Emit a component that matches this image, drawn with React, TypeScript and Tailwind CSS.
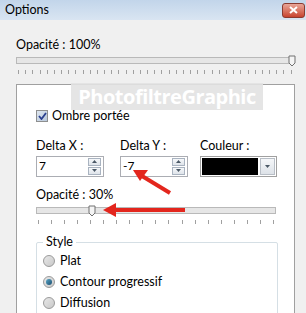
import React from "react";

const font = { fontFamily: 'Lato, "Noto Sans", sans-serif' };

function SliderThumb() {
  return (
    <svg width="8" height="12" viewBox="0 0 8 12" className="block">
      <path d="M1 1 H7 V8 L4 11 L1 8 Z" fill="#f4f4f4" stroke="#707070" strokeWidth="1" />
    </svg>
  );
}

function Slider({ ticks, thumbLeft }: { ticks: number; thumbLeft: string }) {
  return (
    <div>
      <div className="relative h-[12px]">
        <div className="absolute left-0 right-0 top-[2px] h-[7px] border border-[#b9b9b9] bg-[#e6e6e6]" />
        <div className="absolute top-0" style={{ left: thumbLeft }}>
          <SliderThumb />
        </div>
      </div>
      <div className="mt-[3px] flex justify-between px-[2px]">
        {Array.from({ length: ticks }).map((_, i) => (
          <div key={i} className="h-[4px] w-px bg-[#a0a0a0]" />
        ))}
      </div>
    </div>
  );
}

function Spin({ value }: { value: string }) {
  return (
    <div className="flex h-[21px] w-[68px] items-center border border-[#abadb3] bg-white pl-[2px] pr-[2px]">
      <span className="flex-1 text-[12px] leading-none text-black">{value}</span>
      <div className="flex flex-col gap-[1px]">
        {["up", "down"].map((d) => (
          <div
            key={d}
            className="flex h-[8px] w-[13px] items-center justify-center border border-[#a9b3c0] bg-gradient-to-b from-[#f6f8fa] to-[#dfe4ea]"
          >
            <svg width="5" height="3" viewBox="0 0 5 3">
              <path d={d === "up" ? "M0 3 L2.5 0 L5 3 Z" : "M0 0 L2.5 3 L5 0 Z"} fill="#4a5866" />
            </svg>
          </div>
        ))}
      </div>
    </div>
  );
}

function Radio({ checked, label }: { checked?: boolean; label: string }) {
  return (
    <div className="flex h-[21px] items-center gap-[5px]">
      <div className="flex h-[12px] w-[12px] items-center justify-center rounded-full border border-[#9a9a9a] bg-gradient-to-br from-[#e8e8e8] to-[#c9c9c9]">
        {checked && <div className="h-[6px] w-[6px] rounded-full bg-gradient-to-br from-[#5aa7c7] to-[#1b4e70]" />}
      </div>
      <span className="text-[12.5px] text-black">{label}</span>
    </div>
  );
}

export default function App() {
  return (
    <div className="relative h-[313px] w-[306px] overflow-hidden bg-[#f0f0f0] select-none" style={font}>
      {/* Title bar */}
      <div className="flex h-[20px] items-center justify-between bg-gradient-to-b from-[#c2d5ea] to-[#d9e5f2] pl-[5px] pr-[1px]">
        <span className="text-[12.5px] text-black">Options</span>
        <div className="flex h-[15px] w-[23px] items-center justify-center rounded-[3px] border border-[#8a3a30] bg-gradient-to-b from-[#e8a598] to-[#c7422e]">
          <svg width="9" height="8" viewBox="0 0 9 8">
            <path d="M1 1 L8 7 M8 1 L1 7" stroke="white" strokeWidth="2" />
          </svg>
        </div>
      </div>

      {/* Body */}
      <div className="px-[16px] pt-[17px]">
        <div className="text-[12.5px] leading-[16px] text-black">Opacité : 100%</div>
        <div className="mt-[2px] w-[278px]">
          <Slider ticks={39} thumbLeft="272px" />
        </div>

        {/* Panel */}
        <div className="mt-[10px] h-[260px] w-[279px] border border-[#a0a0a0] bg-white px-[19px] pt-[22px]">
          <div className="flex items-center gap-[4px]">
            <div className="flex h-[12px] w-[12px] items-center justify-center border border-[#8e8f8f] bg-gradient-to-br from-[#dfe7f0] to-[#b8c8dc]">
              <svg width="9" height="8" viewBox="0 0 9 8">
                <path d="M1 4 L3.5 7 L8 1" stroke="#2a3f8e" strokeWidth="1.8" fill="none" />
              </svg>
            </div>
            <span className="text-[12.5px] text-black">Ombre portée</span>
          </div>

          <div className="mt-[12px] flex">
            <div className="flex flex-col gap-[2px]">
              <span className="text-[12.5px] leading-[16px] text-black">Delta X :</span>
              <Spin value="7" />
            </div>
            <div className="ml-[16px] flex flex-col gap-[2px]">
              <span className="text-[12.5px] leading-[16px] text-black">Delta Y :</span>
              <Spin value="-7" />
            </div>
            <div className="ml-[12px] flex flex-col gap-[2px]">
              <span className="text-[12.5px] leading-[16px] text-black">Couleur :</span>
              <div className="flex h-[21px] w-[77px] items-center gap-[2px] border border-[#a0a0a0] bg-white p-[1px]">
                <div className="h-full flex-1 bg-black" />
                <div className="flex h-full w-[15px] items-center justify-center border border-[#b8bec6] bg-gradient-to-b from-[#f5f7f9] to-[#dde2e8]">
                  <svg width="5" height="3" viewBox="0 0 5 3">
                    <path d="M0 0 L2.5 3 L5 0 Z" fill="#4a5866" />
                  </svg>
                </div>
              </div>
            </div>
          </div>

          <div className="mt-[10px] text-[12.5px] leading-[16px] text-black">Opacité : 30%</div>
          <div className="mt-[2px] w-[240px]">
            <Slider ticks={19} thumbLeft="52px" />
          </div>

          {/* Style group */}
          <div className="relative mt-[18px] h-[90px] w-[242px] rounded-[2px] border border-[#d5dfe5] pl-[6px] pt-[8px]">
            <span className="absolute -top-[9px] left-[6px] bg-white px-[3px] text-[12.5px] leading-[16px] text-black">
              Style
            </span>
            <Radio label="Plat" />
            <Radio checked label="Contour progressif" />
            <Radio label="Diffusion" />
          </div>
        </div>
      </div>

      {/* Watermark */}
      <div className="absolute left-[71px] top-[83px] flex h-[27px] w-[192px] items-center justify-center bg-[#e2e2e2]/90">
        <span className="text-[20px] font-bold leading-none tracking-tight text-white" style={{ fontFamily: '"Open Sans", sans-serif' }}>
          PhotofiltreGraphic
        </span>
      </div>

      {/* Red arrows */}
      <svg className="pointer-events-none absolute left-0 top-0" width="306" height="313">
        <g stroke="#e3261d" strokeWidth="4" fill="#e3261d">
          <line x1="170" y1="193" x2="142" y2="176" />
          <polygon points="133,170 148,170 140,181" stroke="none" />
          <line x1="185" y1="210" x2="114" y2="210" />
          <polygon points="103,210 116,203 116,217" stroke="none" />
        </g>
      </svg>
    </div>
  );
}
